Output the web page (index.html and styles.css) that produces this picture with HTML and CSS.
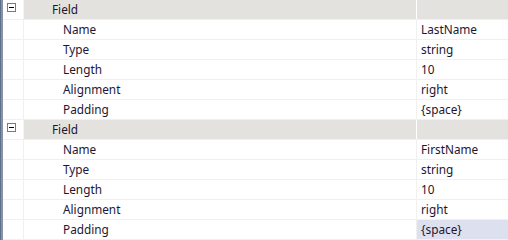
FILE: index.html
```html
<!DOCTYPE html>
<html>
<head>
<meta charset="utf-8">
<link rel="stylesheet" href="styles.css">
</head>
<body>
<div class="frame">
  <div class="stripe"></div>
  <div class="grid">
    <div class="row header">
      <div class="margin"><span class="toggle"></span></div>
      <div class="name">Field</div>
      <div class="value"></div>
    </div>
    <div class="row"><div class="margin"></div><div class="name child">Name</div><div class="value">LastName</div></div>
    <div class="row"><div class="margin"></div><div class="name child">Type</div><div class="value">string</div></div>
    <div class="row"><div class="margin"></div><div class="name child">Length</div><div class="value">10</div></div>
    <div class="row"><div class="margin"></div><div class="name child">Alignment</div><div class="value">right</div></div>
    <div class="row"><div class="margin"></div><div class="name child">Padding</div><div class="value">{space}</div></div>
    <div class="row header">
      <div class="margin"><span class="toggle"></span></div>
      <div class="name">Field</div>
      <div class="value"></div>
    </div>
    <div class="row"><div class="margin"></div><div class="name child">Name</div><div class="value">FirstName</div></div>
    <div class="row"><div class="margin"></div><div class="name child">Type</div><div class="value">string</div></div>
    <div class="row"><div class="margin"></div><div class="name child">Length</div><div class="value">10</div></div>
    <div class="row"><div class="margin"></div><div class="name child">Alignment</div><div class="value">right</div></div>
    <div class="row"><div class="margin"></div><div class="name child">Padding</div><div class="value selected">{space}</div></div>
  </div>
</div>
</body>
</html>
```
FILE: styles.css
```css
html, body {
  margin: 0;
  padding: 0;
  background: #ffffff;
}
.frame {
  display: flex;
  width: 508px;
  height: 240px;
  overflow: hidden;
  font-family: "Noto Sans", "Open Sans", sans-serif;
  font-size: 11.8px;
  color: #1c1634;
}
.stripe {
  width: 3px;
  flex: none;
  background: linear-gradient(to right, #5f6f86 0, #5f6f86 1px, #8593a8 1px, #8593a8 3px);
}
.grid {
  flex: 1;
  display: flex;
  flex-direction: column;
}
.row {
  display: grid;
  grid-template-columns: 21px 393px 1fr;
  height: 19px;
  border-bottom: 1px solid #f0f0f0;
}
.margin {
  border-right: 1px solid #f0f0f0;
  position: relative;
}
.name {
  border-right: 1px solid #f0f0f0;
  padding-left: 39px;
  line-height: 19px;
  white-space: nowrap;
}
.value {
  padding-left: 4px;
  line-height: 19px;
  white-space: nowrap;
}
.row.header .name {
  background: #e4e2de;
  padding-left: 28px;
  border-right: 1px solid #ffffff;
}
.row.header .value {
  background: #e4e2de;
}
.row.header .margin {
  border-right-color: #f4f4f4;
}
.toggle {
  position: absolute;
  left: 4px;
  top: 3px;
  width: 7px;
  height: 7px;
  border: 1px solid #7a7a7a;
  background: #ffffff;
}
.toggle::after {
  content: "";
  position: absolute;
  left: 1px;
  top: 3px;
  width: 5px;
  height: 1px;
  background: #000000;
}
.value.selected {
  background: #dde0ee;
}
```
